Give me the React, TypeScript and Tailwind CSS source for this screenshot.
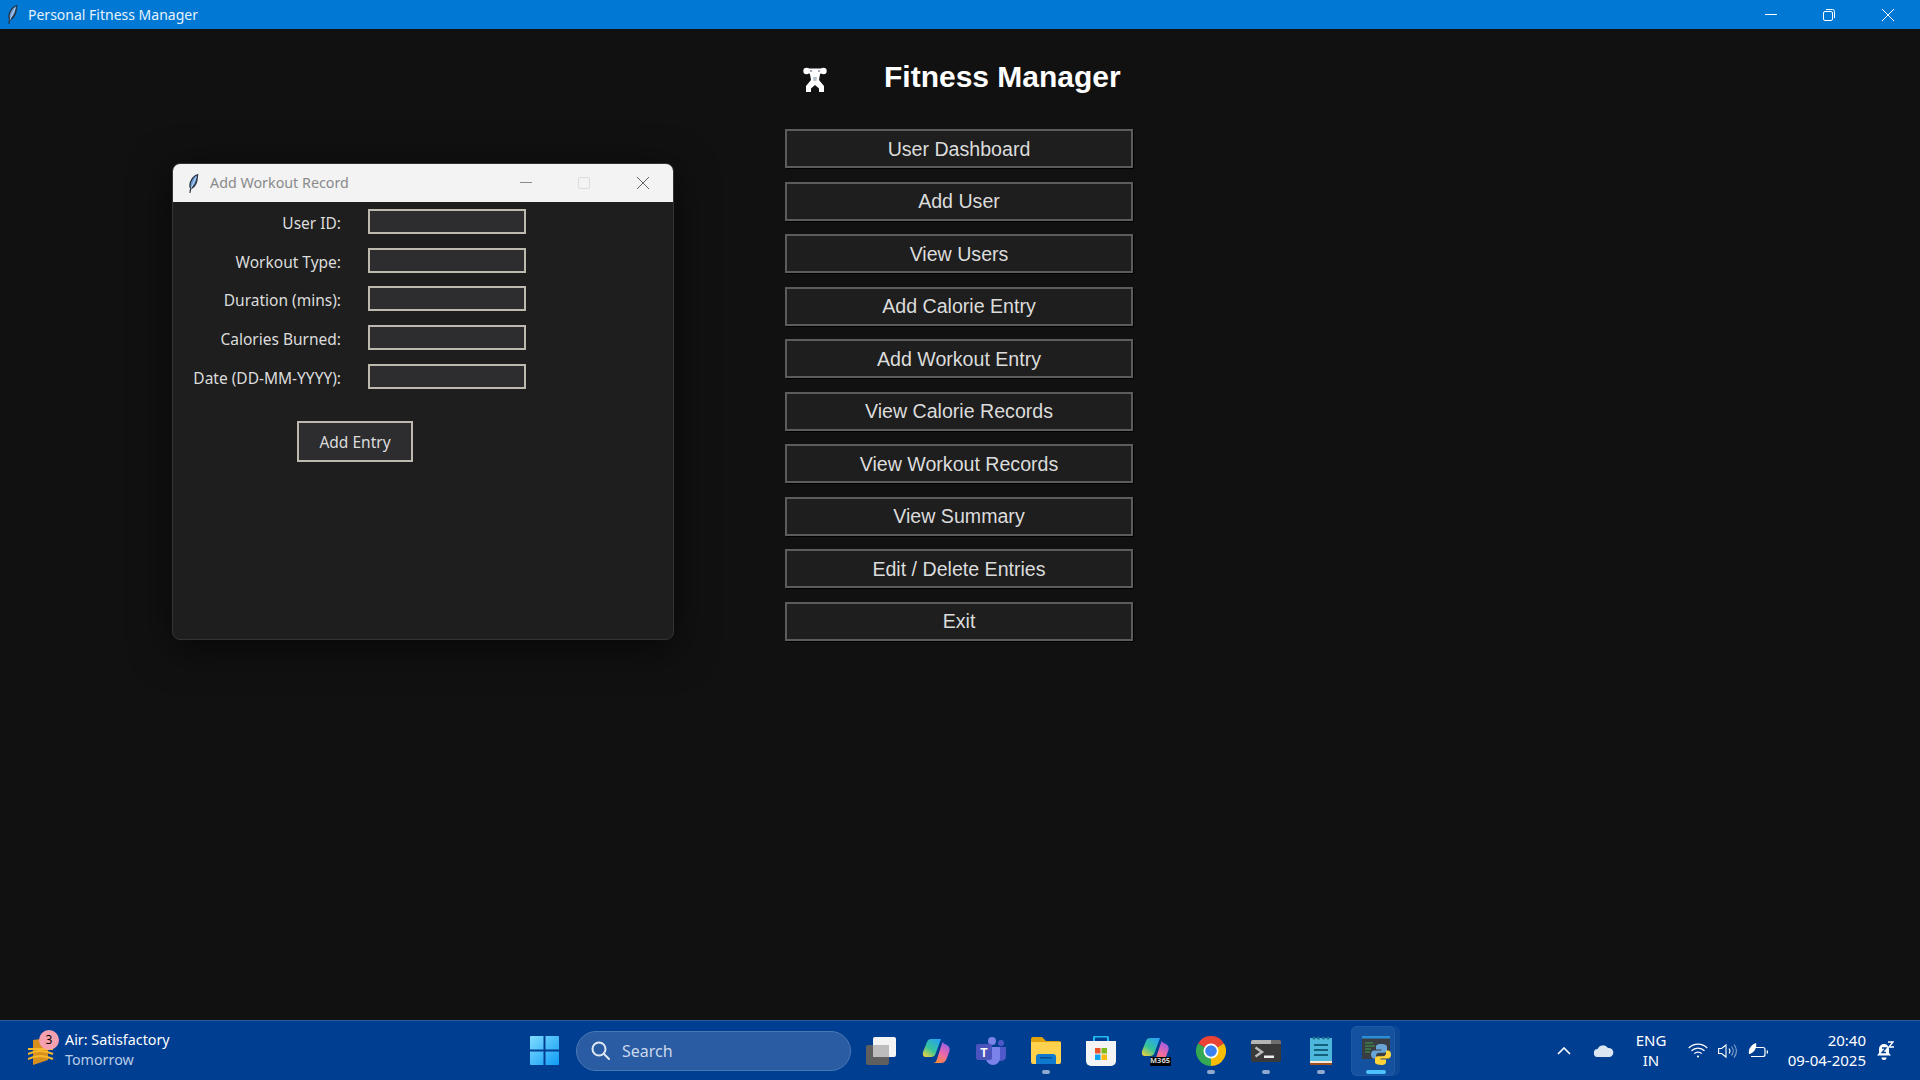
import React from "react"

const menuItems = [
  "User Dashboard",
  "Add User",
  "View Users",
  "Add Calorie Entry",
  "Add Workout Entry",
  "View Calorie Records",
  "View Workout Records",
  "View Summary",
  "Edit / Delete Entries",
  "Exit",
]

const fields = ["User ID:", "Workout Type:", "Duration (mins):", "Calories Burned:", "Date (DD-MM-YYYY):"]

function Feather({ className }: { className?: string }) {
  return (
    <svg viewBox="0 0 12 20" className={className}>
      <path d="M10.5 0.8C6 2 2.5 6.5 2 11.5c-.1 1.2.2 2.4.7 3.2L2 19h1l.9-3.6c3-1 5.3-4.5 6-8.4.3-2.2.6-4.4.6-6.2z" fill="#27313f" />
      <path d="M9.5 2.2C6.5 3.5 3.8 7.2 3.3 11.5c-.1.8 0 1.6.3 2.2 2.4-1 4.3-3.9 5-7.3.2-1.4.6-2.9.9-4.2z" fill="#6f9fd8" />
      <path d="M8.6 3.5 3.6 15" stroke="#d7e6f5" strokeWidth="0.7" fill="none" />
    </svg>
  )
}

function Lifter() {
  return (
    <svg viewBox="0 0 24 26" className="h-[26px] w-[24px]" fill="#fff">
      <circle cx="3.5" cy="5" r="3.2" />
      <circle cx="20.5" cy="5" r="3.2" />
      <path d="M5 2.5h14v3.5L16.5 9h-9L5 6z" />
      <path d="M7 8h10l-1 6 5 6v6h-5v-3.500L12 19l-4 3.500V26H3v-6l5-6z" />
      <circle cx="8" cy="5" r="1.1" fill="#8b93a8" />
      <circle cx="16" cy="5" r="1.1" fill="#8b93a8" />
      <path d="M10 11h4l-.6 4h-2.800z" fill="#b8c0d0" />
    </svg>
  )
}

// Copilot style knot, the M365 tile reuses it with its own gradient ids
function Knot({ idA, idB }: { idA: string; idB: string }) {
  return (
    <svg width="28" height="26" viewBox="0 0 28 26">
      <defs>
        <linearGradient id={idA} x1="0.8" y1="0" x2="0.1" y2="1">
          <stop offset="0" stopColor="#2aa3f2" />
          <stop offset="0.55" stopColor="#35c49a" />
          <stop offset="1" stopColor="#f6d23a" />
        </linearGradient>
        <linearGradient id={idB} x1="0.7" y1="0" x2="0.3" y2="1">
          <stop offset="0" stopColor="#9a5ee8" />
          <stop offset="0.55" stopColor="#ee6aa6" />
          <stop offset="1" stopColor="#f58a3c" />
        </linearGradient>
      </defs>
      <path d="M9 1h10L13.500 16Q12.500 19 9 19H4Q0 19 1 14L5 4Q6 1 9 1z" fill={`url(#${idA})`} />
      <path d="M20.500 4Q22 6 24 6.500Q28.500 8.500 27.500 13L24.500 21Q23 25 19 25H11Q14 25 15 21z" fill={`url(#${idB})`} />
    </svg>
  )
}

function TaskIcon({ children, dot, active }: { children: React.ReactNode; dot?: boolean; active?: boolean }) {
  return (
    <div className="relative flex h-[50px] w-[55px] items-center justify-center">
      {active && (
        <>
          <div className="absolute left-[8px] top-0 h-[50px] w-[44px] rounded-md bg-white/5" />
          <div className="absolute left-[3px] top-0 h-[50px] w-[44px] rounded-md border border-white/5 bg-[#14519f]" />
        </>
      )}
      <div className="relative">{children}</div>
      {dot && <div className="absolute bottom-[2px] left-[24px] h-[4px] w-[8px] rounded-full bg-[#8fa9cf]" />}
      {active && <div className="absolute bottom-[2px] left-[18px] h-[4px] w-[20px] rounded-full bg-[#4cc2ff]" />}
    </div>
  )
}

export default function App() {
  return (
    <div className="flex h-screen w-full flex-col overflow-hidden bg-[#111111] font-['Noto_Sans',sans-serif]">
      {/* main window title bar */}
      <div className="flex h-[29px] shrink-0 items-center bg-[#0078d4] pr-[3px] text-white">
        <Feather className="ml-[5px] h-[21px] w-[15px]" />
        <span className="ml-[8px] text-[14px] text-[#e6f2fb]">Personal Fitness Manager</span>
        <div className="ml-auto flex">
          <div className="flex h-[29px] w-[58px] items-center justify-center">
            <svg width="12" height="2"><rect width="12" height="1" fill="#fff" /></svg>
          </div>
          <div className="flex h-[29px] w-[58px] items-center justify-center">
            <svg width="12" height="12" viewBox="0 0 12 12" fill="none" stroke="#fff">
              <rect x="0.5" y="2.5" width="9" height="9" rx="1.5" />
              <path d="M3 .5h6.500a2 2 0 0 1 2 2V9" />
            </svg>
          </div>
          <div className="flex h-[29px] w-[59px] items-center justify-center">
            <svg width="12" height="12" viewBox="0 0 12 12" stroke="#fff"><path d="M0 0l12 12M12 0L0 12" /></svg>
          </div>
        </div>
      </div>

      {/* app body */}
      <div className="relative flex flex-1 flex-col items-center">
        <div className="mr-[2px] flex h-[94px] w-[348px] items-center pl-[18px]">
          <div className="pt-[6px]">
            <Lifter />
          </div>
          <span className="ml-[57px] pt-[2px] font-['Liberation_Sans',sans-serif] text-[30px] font-bold leading-none text-white">
            Fitness Manager
          </span>
        </div>
        <div className="mr-[2px] mt-[6px] flex w-[348px] flex-col gap-[13.5px]">
          {menuItems.map((item) => (
            <div
              key={item}
              className="flex h-[39px] items-center justify-center border-2 border-[#5c5c5c] bg-[#1e1e1e] pt-[2px] font-['Liberation_Sans',sans-serif] text-[19.6px] text-[#dcdcdc] shadow-[1px_1px_0_#000]"
            >
              {item}
            </div>
          ))}
        </div>

        {/* dialog */}
        <div className="absolute left-[172px] top-[134px] flex h-[477px] w-[502px] flex-col overflow-hidden rounded-lg border border-[#333] bg-[#1e1e1e] shadow-[0_8px_40px_rgba(0,0,0,0.6)]">
          <div className="flex h-[38px] shrink-0 items-center bg-[#f3f3f3]">
            <Feather className="ml-[13px] h-[21px] w-[15px]" />
            <span className="ml-[9px] pb-[1px] text-[14.3px] text-[#8a8a8a]">Add Workout Record</span>
            <div className="ml-auto flex">
              <div className="flex h-[38px] w-[58px] items-center justify-center">
                <svg width="12" height="2"><rect width="12" height="1" fill="#8a8a8a" /></svg>
              </div>
              <div className="flex h-[38px] w-[58px] items-center justify-center">
                <svg width="12" height="12"><rect x="0.5" y="0.5" width="11" height="11" rx="1.5" fill="none" stroke="#ddd" /></svg>
              </div>
              <div className="flex h-[38px] w-[60px] items-center justify-center">
                <svg width="12" height="12" viewBox="0 0 12 12" stroke="#666"><path d="M0 0l12 12M12 0L0 12" /></svg>
              </div>
            </div>
          </div>
          <div className="flex flex-col gap-[13.7px] pt-[7px]">
            {fields.map((f) => (
              <div key={f} className="flex h-[25px] items-center">
                <span className="w-[168px] whitespace-nowrap pt-[4px] text-right text-[15.5px] text-[#dcdcdc]">{f}</span>
                <div className="ml-[27px] h-[25px] w-[158px] border-2 border-[#bdb9ae] bg-[#2d2d30]" />
              </div>
            ))}
          </div>
          <div className="ml-[124px] mt-[32px] flex h-[41px] w-[116px] items-center justify-center border-2 border-[#bdb9ae] bg-[#2d2d30] pt-[2px] text-[15.5px] text-[#dcdcdc]">
            Add Entry
          </div>
        </div>
      </div>

      {/* taskbar */}
      <div className="relative flex h-[60px] shrink-0 items-center border-t border-[#2a5a9e] bg-[#003e92] text-white">
        <div className="flex w-[530px] shrink-0 items-center pl-[28px]">
          <div className="relative h-[30px] w-[37px]">
            <svg viewBox="0 0 26 30" className="h-[30px] w-[26px]">
              <path d="M5 4l15-2v22L5 29z" fill="#d98f1c" />
              <path d="M0 13h25M0 18c8-4 16-4 25 0M0 23c8-4 16-4 25 0" stroke="#f5b72c" strokeWidth="2" fill="none" />
            </svg>
            <div className="absolute left-[11px] top-[-6px] flex h-[20px] w-[20px] items-center justify-center rounded-full bg-[#f7a1b0] text-[12px] text-black">
              3
            </div>
          </div>
          <div className="flex flex-col pb-[2px] text-[14.3px] leading-[20px]">
            <span>Air: Satisfactory</span>
            <span className="text-[#b9cbe6]">Tomorrow</span>
          </div>
        </div>

        <svg viewBox="0 0 29 29" className="h-[29px] w-[29px] shrink-0">
          <defs>
            <linearGradient id="win" x1="0" y1="0" x2="1" y2="1">
              <stop offset="0" stopColor="#7fdcff" />
              <stop offset="1" stopColor="#0f9bf5" />
            </linearGradient>
          </defs>
          <path d="M1 0h12.500v13.500H0V1a1 1 0 0 1 1-1zM15.500 0H28a1 1 0 0 1 1 1v12.500H15.500zM0 15.500h13.500V29H1a1 1 0 0 1-1-1zM15.500 15.500H29V28a1 1 0 0 1-1 1H15.500z" fill="url(#win)" />
        </svg>

        <div className="ml-[17px] flex h-[40px] w-[275px] shrink-0 items-center rounded-full border border-[#4a78b4] bg-[#2a5ca3] pl-[14px]">
          <svg width="19" height="19" viewBox="0 0 19 19" fill="none" stroke="#dfe8f4" strokeWidth="2">
            <circle cx="8" cy="8" r="6.5" />
            <path d="M13 13l5 5" strokeLinecap="round" />
          </svg>
          <span className="ml-[12px] text-[16px] text-[#c9d8ec]">Search</span>
        </div>

        <div className="ml-[2px] flex items-center">
          <TaskIcon>
            <svg width="30" height="28" viewBox="0 0 30 28">
              <rect x="0" y="8" width="23" height="20" rx="2" fill="#5f5f5f" />
              <rect x="7" y="0" width="23" height="20" rx="2" fill="#f4f4f4" />
              <rect x="7" y="8" width="16" height="12" fill="#bdbdbd" />
            </svg>
          </TaskIcon>
          <TaskIcon>
            <Knot idA="copA" idB="copB" />
          </TaskIcon>
          <TaskIcon>
            <svg width="30" height="28" viewBox="0 0 30 28">
              <circle cx="16" cy="4" r="4" fill="#7b83eb" />
              <circle cx="25" cy="6" r="3" fill="#5059c9" />
              <path d="M21 10h9v9a5 5 0 0 1-9 3z" fill="#5059c9" />
              <path d="M10 10h14v11a7 7 0 0 1-14 0z" fill="#7b83eb" />
              <rect x="0" y="7" width="16" height="16" rx="2" fill="#4b53bc" />
              <text x="8" y="20" textAnchor="middle" fontSize="12" fontWeight="700" fill="#fff" fontFamily="Liberation Sans, sans-serif">T</text>
            </svg>
          </TaskIcon>
          <TaskIcon dot>
            <svg width="30" height="27" viewBox="0 0 30 27">
              <path d="M0 2a2 2 0 0 1 2-2h9l4 4h13a2 2 0 0 1 2 2v4H0z" fill="#e0a30e" />
              <path d="M0 5h30v20a2 2 0 0 1-2 2H2a2 2 0 0 1-2-2z" fill="#ffd24d" />
              <path d="M5 27v-7a3 3 0 0 1 3-3h14a3 3 0 0 1 3 3v7z" fill="#0f78cf" />
              <rect x="9" y="20" width="12" height="1.5" fill="#0a4f8c" />
            </svg>
          </TaskIcon>
          <TaskIcon>
            <svg width="30" height="30" viewBox="0 0 30 30">
              <path d="M8 7V2a1.500 1.500 0 0 1 1.500-1.500h11A1.500 1.500 0 0 1 22 2v5" fill="none" stroke="#22b8f0" strokeWidth="2" />
              <path d="M0 5h30v20a5 5 0 0 1-5 5H5a5 5 0 0 1-5-5z" fill="#f4f4f4" />
              <rect x="9" y="12" width="5.5" height="5.5" fill="#e8532b" />
              <rect x="15.5" y="12" width="5.5" height="5.5" fill="#7fba1a" />
              <rect x="9" y="18.5" width="5.5" height="5.5" fill="#0ca4ee" />
              <rect x="15.5" y="18.5" width="5.5" height="5.5" fill="#fcb90e" />
            </svg>
          </TaskIcon>
          <TaskIcon>
            <div className="relative h-[28px] w-[30px]">
              <Knot idA="m365A" idB="m365B" />
              <div className="absolute left-[9px] top-[20px] flex h-[9px] w-[21px] items-center justify-center rounded-[1px] bg-black text-[7.5px] font-bold leading-none text-[#d9d9d9]">
                M365
              </div>
            </div>
          </TaskIcon>
          <TaskIcon dot>
            <svg width="30" height="30" viewBox="0 0 30 30">
              <path d="M15 15L2 7.500A15 15 0 0 1 28 7.500z" fill="#ea4335" />
              <path d="M15 15L28 7.500A15 15 0 0 1 15 30z" fill="#fbbc05" />
              <path d="M15 15L15 30A15 15 0 0 1 2 7.500z" fill="#34a853" />
              <circle cx="15" cy="15" r="7.5" fill="#fff" />
              <circle cx="15" cy="15" r="5.8" fill="#3b82f0" />
            </svg>
          </TaskIcon>
          <TaskIcon dot>
            <svg width="30" height="22" viewBox="0 0 30 22">
              <rect width="30" height="22" rx="2" fill="#3a3a3a" />
              <path d="M0 2a2 2 0 0 1 2-2h18v4H0z" fill="#b5b5b5" />
              <path d="M20 0h8a2 2 0 0 1 2 2v2H20z" fill="#6f6f6f" />
              <path d="M4.500 7.500L11 12l-6.500 4.500" fill="none" stroke="#bdbdbd" strokeWidth="2.4" />
              <rect x="13" y="15.5" width="10" height="2.5" fill="#eee" />
            </svg>
          </TaskIcon>
          <TaskIcon dot>
            <svg width="22" height="29" viewBox="0 0 22 29">
              <rect x="0" y="2" width="22" height="23" fill="#4db8dc" />
              <rect x="0" y="25" width="22" height="2" fill="#f4e9d8" />
              <rect x="0" y="27" width="22" height="2" fill="#9a4f1c" />
              <circle cx="4" cy="2" r="1.5" fill="#1f6f8f" />
              <circle cx="8.5" cy="2" r="1.5" fill="#1f6f8f" />
              <circle cx="13.5" cy="2" r="1.5" fill="#1f6f8f" />
              <circle cx="18" cy="2" r="1.5" fill="#1f6f8f" />
              <path d="M4 9h14M4 14h14M4 19h14" stroke="#14617f" strokeWidth="2" />
            </svg>
          </TaskIcon>
          <TaskIcon active>
            <svg width="30" height="30" viewBox="0 0 30 30">
              <rect x="1" y="0" width="28" height="23" fill="#3a3d42" />
              <rect x="1" y="0" width="28" height="2.5" fill="#2b8fd6" />
              <path d="M4 7h8M4 10h10M4 13h6M4 16h5" stroke="#3fa34d" strokeWidth="1" />
              <path d="M20 8c-4 0-5 1.400-5 3v2.500h5.500v1H13c-2 0-3 1.700-3 4s1 4 3 4h2v-2.800c0-1.900 1.500-3 3.200-3h5c1.700 0 2.800-1.200 2.800-2.800v-3c0-1.700-1.700-2.900-6-2.900z" fill="#6aa5d8" />
              <g transform="rotate(180 20 18.5)">
                <path d="M20 8c-4 0-5 1.400-5 3v2.500h5.500v1H13c-2 0-3 1.700-3 4s1 4 3 4h2v-2.800c0-1.900 1.500-3 3.200-3h5c1.700 0 2.800-1.200 2.800-2.800v-3c0-1.700-1.700-2.900-6-2.900z" fill="#ffd43b" />
              </g>
            </svg>
          </TaskIcon>
        </div>

        {/* system tray */}
        <div className="ml-auto flex items-center pr-[26px]">
          <svg width="14" height="8" viewBox="0 0 14 8" fill="none" stroke="#fff" strokeWidth="1.6"><path d="M1 7l6-6 6 6" /></svg>
          <svg className="ml-[23px]" width="20" height="13" viewBox="0 0 20 13">
            <path d="M4 13a4 4 0 0 1-.5-8A6 6 0 0 1 14 4a4.500 4.500 0 0 1 1.500 9z" fill="#dbe6f3" />
          </svg>
          <div className="ml-[19px] flex w-[36px] flex-col items-center pb-[2px] text-[15px] leading-[20px]">
            <span>ENG</span>
            <span>IN</span>
          </div>
          <svg className="ml-[19px]" width="20" height="15" viewBox="0 0 20 15" fill="none" stroke="#fff" strokeWidth="1.3">
            <path d="M.8 5a13 13 0 0 1 18.400 0M3.500 7.800a9.200 9.200 0 0 1 13 0M6.300 10.600a5.200 5.200 0 0 1 7.400 0" />
            <circle cx="10" cy="13.5" r="1.1" fill="#fff" stroke="none" />
          </svg>
          <svg className="ml-[10px]" width="20" height="16" viewBox="0 0 20 16" fill="none" stroke="#fff" strokeWidth="1.1">
            <path d="M.6 5.500h3L8 2v12l-4.400-3.500h-3z" />
            <path d="M11 5.500a4 4 0 0 1 0 5" />
            <path d="M13.500 3.500a7 7 0 0 1 0 9M16 1.500a10 10 0 0 1 0 13" stroke="#8fa9cf" />
          </svg>
          <svg className="ml-[10px]" width="20" height="17" viewBox="0 0 20 17" fill="none" stroke="#fff" strokeWidth="1.2">
            <path d="M5 5.500h10a2 2 0 0 1 2 2v5a2 2 0 0 1-2 2H3" />
            <path d="M19.500 8.500v3" strokeWidth="1.6" />
            <path d="M1 12C0 7 3 3 8 1c1 4-1 9-6 11z" fill="#fff" stroke="none" />
          </svg>
          <div className="ml-[10px] flex w-[88px] flex-col items-end pb-[2px] text-[15px] leading-[20px]">
            <span>20:40</span>
            <span>09-04-2025</span>
          </div>
          <svg className="ml-[10px]" width="18" height="20" viewBox="0 0 18 20">
            <path d="M8 3a5 5 0 0 1 5 5v4l2 2.500H1L3 12V8a5 5 0 0 1 5-5z" fill="#fff" />
            <path d="M5.500 16.500h5a2.500 2.500 0 0 1-5 0z" fill="#fff" />
            <path d="M12 1h5l-4 5h5" fill="none" stroke="#fff" strokeWidth="1.4" />
            <path d="M6 7h4l-4 4.500h4" fill="none" stroke="#003e92" strokeWidth="1.3" />
          </svg>
        </div>
      </div>
    </div>
  )
}
